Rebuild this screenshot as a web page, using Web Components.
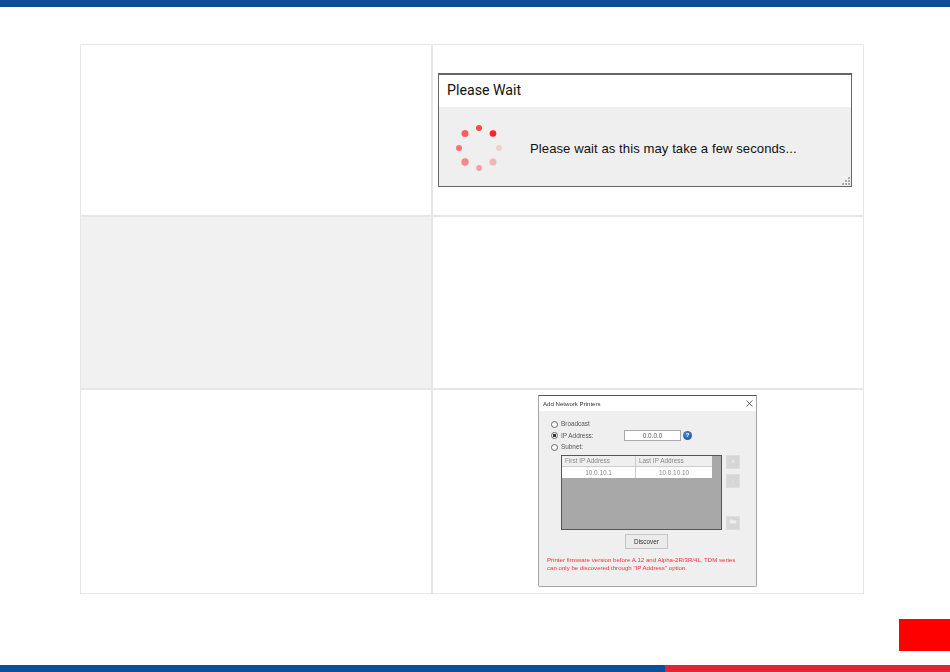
<!DOCTYPE html>
<html>
<head>
<meta charset="utf-8">
<title>Manual page</title>
<style>
    html, body { margin: 0; height: 100%; background: #fff; }
</style>
</head>
<body>
<manual-page>
    <doc-table>
        <doc-cell></doc-cell>
        <doc-cell pad><wait-dialog></wait-dialog></doc-cell>
        <doc-cell shaded></doc-cell>
        <doc-cell></doc-cell>
        <doc-cell></doc-cell>
        <doc-cell center><printer-dialog></printer-dialog></doc-cell>
    </doc-table>
</manual-page>

<script>
    class ManualPage extends HTMLElement {
        connectedCallback() {
            this.attachShadow({ mode: 'open' }).innerHTML = `
                <style>
                    :host { display: flex; flex-direction: column; height: 672px; overflow: hidden; }
                    .top { height: 7px; background: #0d4f97; }
                    main { padding: 37px 86px 0 80px; }
                    .tab { width: 51px; height: 32px; margin: 25px 0 0 auto; background: #f00; }
                    .bottom { display: flex; height: 7px; margin-top: auto; }
                    .blue { width: 665px; background: #0d4f97; }
                    .red { flex: 1; background: #e32235; }
                </style>
                <div class="top"></div>
                <main><slot></slot></main>
                <div class="tab"></div>
                <div class="bottom"><div class="blue"></div><div class="red"></div></div>`;
        }
    }

    class DocTable extends HTMLElement {
        connectedCallback() {
            this.attachShadow({ mode: 'open' }).innerHTML = `
                <style>
                    :host {
                        display: grid;
                        grid-template-columns: 352px 432px;
                        grid-template-rows: 172px 173px 205px;
                        width: 784px;
                        box-sizing: border-box;
                    }
                </style>
                <slot></slot>`;
        }
    }

    class DocCell extends HTMLElement {
        connectedCallback() {
            this.attachShadow({ mode: 'open' }).innerHTML = `
                <style>
                    :host {
                        display: flex;
                        box-sizing: border-box;
                        border: 1px solid #e6e6e6;
                        min-width: 0;
                    }
                    :host([pad]) { padding: 28px 0 0 5px; }
                    :host([center]) { padding: 5px 0 0 105px; }
                    :host([shaded]) { background: #f1f1f1; }
                </style>
                <slot></slot>`;
        }
    }

    class WaitDialog extends HTMLElement {
        connectedCallback() {
            const dots = [
                [479, 128, 3, .8], [493, 133.5, 3.3, 1], [499, 148, 3, .15], [493, 162, 3.5, .28],
                [479, 168, 3, .38], [465, 162, 3.7, .5], [459, 148, 3, .6], [465, 133.5, 3.5, .7]
            ].map(([x, y, r, o]) => `<circle cx="${x - 455}" cy="${y - 124}" r="${r}" fill="#f22" opacity="${o}"/>`).join('');
            this.attachShadow({ mode: 'open' }).innerHTML = `
                <style>
                    :host {
                        display: flex; flex-direction: column; position: relative;
                        box-sizing: border-box; width: 414px; height: 114px;
                        border: 1px solid #666; border-top-width: 2px;
                        font-family: "Liberation Sans", sans-serif; color: #111;
                    }
                    .title { height: 32px; background: #fff; padding-left: 8px; font: 14.2px/31px Roboto, sans-serif; }
                    .body { flex: 1; display: flex; align-items: center; background: #efefef; padding: 3px 0 0 16px; }
                    svg { display: block; width: 48px; height: 48px; margin-right: 27px; }
                    .msg { font-size: 13.1px; letter-spacing: .07px; }
                    .grip { position: absolute; right: 1px; bottom: 1px; width: 8px; height: 8px; }
                </style>
                <div class="title">Please Wait</div>
                <div class="body">
                    <svg viewBox="0 0 48 48">${dots}</svg>
                    <span class="msg">Please wait as this may take a few seconds...</span>
                </div>
                <svg class="grip" viewBox="0 0 8 8" style="margin:0"><g fill="#aaa">
                    <rect x="6" y="0" width="2" height="2"/><rect x="3" y="3" width="2" height="2"/><rect x="6" y="3" width="2" height="2"/>
                    <rect x="0" y="6" width="2" height="2"/><rect x="3" y="6" width="2" height="2"/><rect x="6" y="6" width="2" height="2"/>
                </g></svg>`;
        }
    }

    class PrinterDialog extends HTMLElement {
        connectedCallback() {
            this.attachShadow({ mode: 'open' }).innerHTML = `
                <style>
                    :host {
                        display: block; box-sizing: border-box; width: 219px; height: 192px;
                        border: 1px solid #a4a4a4; border-top-color: #555; border-radius: 0 0 2px 2px;
                        background: #efefef; color: #555; position: relative;
                        font: 6.4px/10px "Liberation Sans", sans-serif;
                        filter: blur(.25px);
                    }
                    .title { display: flex; justify-content: space-between; align-items: center; height: 15px; padding: 0 3px 0 4px; background: #fff; color: #333; font-size: 6.1px; }
                    .title svg { width: 7px; height: 7px; }
                    .opts { padding: 7.3px 0 0 12px; }
                    .opt { display: flex; align-items: center; height: 11.5px; gap: 3px; white-space: nowrap; }
                    .radio { box-sizing: border-box; width: 7px; height: 7px; border: 1px solid #666; border-radius: 50%; background: #fff; }
                    .radio.on { background: radial-gradient(circle, #333 0 1.6px, #fff 2px); }
                    .ip { box-sizing: border-box; width: 57px; height: 11px; margin-left: 30px; border: 1px solid #aaa; background: #fff; text-align: center; line-height: 9px; }
                    .help { width: 9px; height: 9px; margin-left: -1px; border-radius: 50%; background: radial-gradient(circle at 40% 35%, #4a8bd8, #14479a); color: #fff; font: bold 6px/9px "Liberation Sans", sans-serif; text-align: center; }
                    .tbl-row { display: flex; margin: 2px 0 0 22px; gap: 4px; }
                    .tbl { box-sizing: border-box; width: 161px; height: 75px; border: 1px solid #555; background: #a8a8a8; }
                    .r { display: flex; width: 150px; background: #fff; }
                    .r span { flex: 1; box-sizing: border-box; text-align: center; color: #888; height: 11px; line-height: 11px; }
                    .r span:first-child { flex: 0 0 74px; border-right: 1px solid #ccc; }
                    .r.head { background: #efefef; border-bottom: 1px solid #ccc; }
                    .r.head span { text-align: left; padding-left: 3px; height: 10px; line-height: 10px; }
                    .side { display: flex; flex-direction: column; width: 14px; }
                    .side b { display: block; height: 14px; margin-bottom: 5px; background: #d6d6d6; border: 1px solid #ddd; box-sizing: border-box; color: #eee; text-align: center; font-weight: normal; line-height: 11px; }
                    .side b:last-child { margin: auto 0 0; }
                    .discover { box-sizing: border-box; display: block; width: 43px; height: 15px; margin: 4px 0 0 86px; border: 1px solid #c4c4c4; background: #ebebeb; color: #333; text-align: center; line-height: 13px; }
                    .note { margin: 7.5px 0 0 8px; color: #fb2c40; font-size: 6.1px; line-height: 7.5px; white-space: nowrap; }
                </style>
                <div class="title">Add Network Printers
                    <svg viewBox="0 0 7 7"><path d="M.5.5l6 6M6.5.5l-6 6" stroke="#444" stroke-width=".8"/></svg>
                </div>
                <div class="opts">
                    <div class="opt"><span class="radio"></span>Broadcast</div>
                    <div class="opt"><span class="radio on"></span><span style="width:30px">IP Address:</span><span class="ip">0.0.0.0</span><span class="help">?</span></div>
                    <div class="opt"><span class="radio"></span>Subnet:</div>
                </div>
                <div class="tbl-row">
                    <div class="tbl">
                        <div class="r head"><span>First IP Address</span><span>Last IP Address</span></div>
                        <div class="r"><span>10.0.10.1</span><span>10.0.10.10</span></div>
                    </div>
                    <div class="side"><b>+</b><b>-</b><b>
                        <svg viewBox="0 0 10 10" width="8" height="8"><path d="M1 8V3h3l1 1h4v4z" fill="#eee"/></svg>
                    </b></div>
                </div>
                <span class="discover">Discover</span>
                <div class="note">Printer firmware version before A.12 and Alpha-2R/3R/4L, TDM series<br>can only be discovered through "IP Address" option.</div>`;
        }
    }

    customElements.define('manual-page', ManualPage);
    customElements.define('doc-table', DocTable);
    customElements.define('doc-cell', DocCell);
    customElements.define('wait-dialog', WaitDialog);
    customElements.define('printer-dialog', PrinterDialog);
</script>
</body>
</html>
